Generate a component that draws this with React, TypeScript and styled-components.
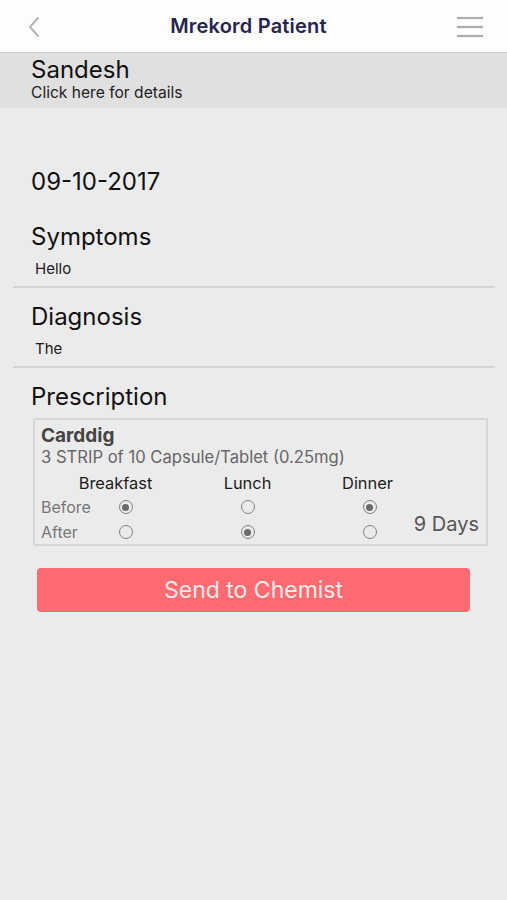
import React from "react";
import styled, { createGlobalStyle } from "styled-components";

const GlobalStyle = createGlobalStyle`
    html, body {
        margin: 0;
        padding: 0;
        background: #ebebeb;
        font-family: Inter, "Noto Sans", "Liberation Sans", sans-serif;
    }
`

const sections = [
    { title: "Symptoms", value: "Hello" },
    { title: "Diagnosis", value: "The" },
]

const meals = [
    { name: "Breakfast", before: true, after: false, shift: 20 },
    { name: "Lunch", before: false, after: true, shift: 0 },
    { name: "Dinner", before: true, after: false, shift: 4 },
]

const BackIcon = () => (
    <svg width="14" height="22" viewBox="0 0 14 22">
        <path d="M11 2 L3 11 L11 20" fill="none" stroke="#b4b4b4" strokeWidth="2" strokeLinecap="round" strokeLinejoin="round" />
    </svg>
)

const MenuIcon = () => (
    <svg width="28" height="22" viewBox="0 0 28 22">
        <g stroke="#adadad" strokeWidth="2.2">
            <line x1="1" y1="2" x2="27" y2="2" />
            <line x1="1" y1="11" x2="27" y2="11" />
            <line x1="1" y1="20" x2="27" y2="20" />
        </g>
    </svg>
)

export default function App() {
    return (
        <Page>
            <GlobalStyle />
            <Header>
                <HeaderButton><BackIcon /></HeaderButton>
                <Title>Mrekord Patient</Title>
                <HeaderButton><MenuIcon /></HeaderButton>
            </Header>
            <PatientBand>
                <PatientName>Sandesh</PatientName>
                <PatientHint>Click here for details</PatientHint>
            </PatientBand>

            <DateText>09-10-2017</DateText>

            {sections.map(s =>
                <Section key={s.title}>
                    <SectionTitle>{s.title}</SectionTitle>
                    <SectionValue>{s.value}</SectionValue>
                    <Divider />
                </Section>
            )}

            <SectionTitle>Prescription</SectionTitle>
            <Card>
                <DrugName>Carddig</DrugName>
                <DrugDose>3 STRIP of 10 Capsule/Tablet (0.25mg)</DrugDose>
                <DoseGrid>
                    <span />
                    {meals.map((m, i) =>
                        <MealHead key={m.name} $col={2 + i * 2} $shift={m.shift}>{m.name}</MealHead>
                    )}
                    <RowLabel $row={2}>Before</RowLabel>
                    {meals.map((m, i) =>
                        <Radio key={"b" + m.name} $col={2 + i * 2} $row={2} $checked={m.before} />
                    )}
                    <RowLabel $row={3}>After</RowLabel>
                    {meals.map((m, i) =>
                        <Radio key={"a" + m.name} $col={2 + i * 2} $row={3} $checked={m.after} />
                    )}
                    <Days>9 Days</Days>
                </DoseGrid>
            </Card>

            <SendButton>Send to Chemist</SendButton>
        </Page>
    );
}

const Page = styled.div`
    min-height: 900px;
    background: #ebebeb;
    display: flex;
    flex-direction: column;
`

const Header = styled.div`
    height: 52px;
    background: #fdfdfd;
    border-bottom: 1px solid #cfcfcf;
    display: flex;
    align-items: center;
    justify-content: space-between;
    padding: 0 23px 0 27px;
`

const HeaderButton = styled.div`
    display: flex;
    align-items: center;
    padding-top: 1px;
`

const Title = styled.div`
    font-size: 20px;
    font-weight: 600;
    color: #26234f;
    line-height: 52px;
    letter-spacing: 0.2px;
`

const PatientBand = styled.div`
    background: #e0e0e0;
    height: 55px;
    padding: 2px 0 0 31px;
    box-sizing: border-box;
`

const PatientName = styled.div`
    font-size: 24px;
    line-height: 29px;
    color: #111;
`

const PatientHint = styled.div`
    font-size: 15.6px;
    line-height: 18px;
    color: #222;
`

const DateText = styled.div`
    font-size: 24px;
    line-height: 29px;
    color: #111;
    margin: 59px 0 26px 31px;
`

const Section = styled.div`
    display: flex;
    flex-direction: column;
    margin-bottom: 14px;
`

const SectionTitle = styled.div`
    font-size: 24px;
    line-height: 29px;
    color: #111;
    margin-left: 31px;
`

const SectionValue = styled.div`
    font-size: 15px;
    line-height: 18px;
    color: #1a1a1a;
    margin: 9px 0 8px 35px;
`

const Divider = styled.div`
    height: 2px;
    background: #d4d4d4;
    margin: 0 12px 0 13px;
`

const Card = styled.div`
    margin: 7px 19px 0 33px;
    border: 2px solid #d6d6d6;
    padding: 4px 7px 0 6px;
`

const DrugName = styled.div`
    font-size: 19px;
    font-weight: 700;
    line-height: 23px;
    color: #444;
`

const DrugDose = styled.div`
    font-size: 16.6px;
    line-height: 19px;
    color: #666;
    margin-top: 1px;
`

const DoseGrid = styled.div`
    display: grid;
    grid-template-columns: 54px 61px 61px 61px 61px 61px 1fr;
    grid-template-rows: 21px 26px 24px;
    align-items: center;
    margin-top: 6px;
`

const MealHead = styled.div<{ $col: number; $shift: number }>`
    grid-column: ${p => p.$col};
    grid-row: 1;
    justify-self: center;
    white-space: nowrap;
    font-size: 16.4px;
    line-height: 19px;
    color: #1c1c1c;
    margin-right: ${p => p.$shift}px;
`

const RowLabel = styled.div<{ $row: number }>`
    grid-column: 1;
    grid-row: ${p => p.$row};
    font-size: 16px;
    line-height: 19px;
    color: #777;
`

const Radio = styled.span<{ $col: number; $row: number; $checked: boolean }>`
    grid-column: ${p => p.$col};
    grid-row: ${p => p.$row};
    justify-self: center;
    width: 14px;
    height: 14px;
    box-sizing: border-box;
    border-radius: 50%;
    border: 1px solid #808080;
    display: flex;
    align-items: center;
    justify-content: center;

    &::after {
        content: "";
        width: 7px;
        height: 7px;
        border-radius: 50%;
        background: ${p => p.$checked ? "#6a6a6a" : "transparent"};
    }
`

const Days = styled.div`
    grid-column: 7;
    grid-row: 2 / 4;
    justify-self: end;
    margin-top: 10px;
    font-size: 20px;
    line-height: 24px;
    color: #555;
`

const SendButton = styled.div`
    margin: 22px 37px 0 37px;
    height: 44px;
    border-radius: 4px;
    background: #ff6b70;
    color: #fdeaea;
    font-size: 23px;
    line-height: 44px;
    text-align: center;
`
